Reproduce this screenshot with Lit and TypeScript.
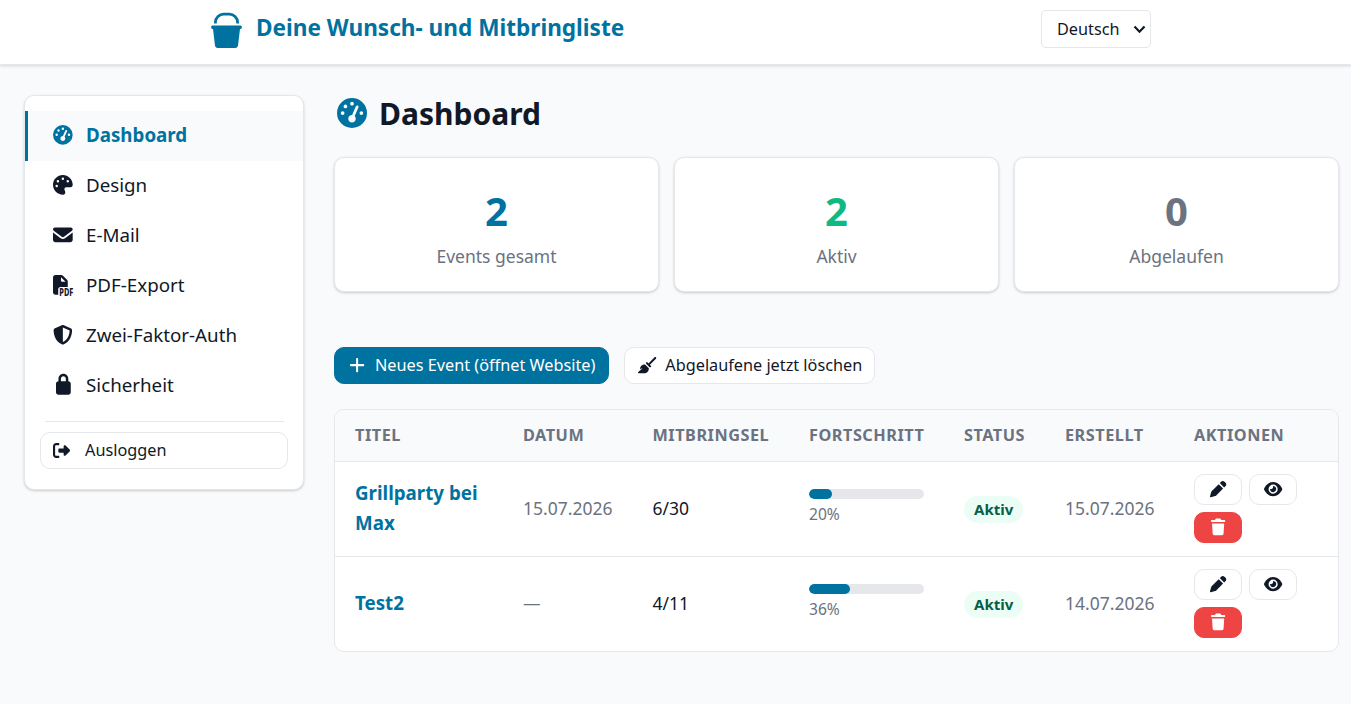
import { LitElement, html, css, svg } from 'lit';
import { customElement, property, state } from 'lit/decorators.js';
import { classMap } from 'lit/directives/class-map.js';
import { styleMap } from 'lit/directives/style-map.js';

interface IconShape {
  width: number;
  path: string;
  label?: string;
}

const ICONS: Record<string, IconShape> = {
  gauge: {
    width: 512,
    path: 'M0 256a256 256 0 1 1 512 0A256 256 0 1 1 0 256zM288 96a32 32 0 1 0 -64 0 32 32 0 1 0 64 0zM256 416c35.3 0 64-28.7 64-64c0-17.4-6.9-33.1-18.1-44.6L366 161.7c5.3-12.1-.2-26.3-12.3-31.6s-26.3 .2-31.6 12.3L257.9 288c-.6 0-1.3 0-1.9 0c-35.3 0-64 28.7-64 64s28.7 64 64 64zM176 144a32 32 0 1 0 -64 0 32 32 0 1 0 64 0zM96 288a32 32 0 1 0 0-64 32 32 0 1 0 0 64zm352-32a32 32 0 1 0 -64 0 32 32 0 1 0 64 0z',
  },
  palette: {
    width: 512,
    path: 'M512 256c0 .9 0 1.8 0 2.7c-.4 36.5-33.6 61.3-70.1 61.3H344c-26.5 0-48 21.5-48 48c0 3.4 .4 6.7 1 9.9c2.1 10.2 6.5 20 10.8 29.9c6.1 13.8 12.1 27.5 12.1 42c0 31.8-21.6 60.7-53.4 62c-3.5 .1-7 .2-10.6 .2C114.6 512 0 397.4 0 256S114.6 0 256 0S512 114.6 512 256zM128 288a32 32 0 1 0 -64 0 32 32 0 1 0 64 0zm0-96a32 32 0 1 0 0-64 32 32 0 1 0 0 64zM288 96a32 32 0 1 0 -64 0 32 32 0 1 0 64 0zm96 96a32 32 0 1 0 0-64 32 32 0 1 0 0 64z',
  },
  envelope: {
    width: 512,
    path: 'M48 64c-26.5 0-48 21.5-48 48 0 15.1 7.1 29.3 19.2 38.4l208 156c17.1 12.8 40.5 12.8 57.6 0l208-156c12.1-9.1 19.2-23.3 19.2-38.4 0-26.5-21.5-48-48-48L48 64zM0 196L0 384c0 35.3 28.7 64 64 64l384 0c35.3 0 64-28.7 64-64l0-188-198.4 148.8c-34.1 25.6-81.1 25.6-115.2 0L0 196z',
  },
  pdf: {
    width: 512,
    path: 'M64 0H214C231 0 247 7 259 19L365 125C377 137 384 153 384 170V312H192C161 312 136 337 136 368V512H64C28.7 512 0 483 0 448V64C0 28.7 28.7 0 64 0ZM208 58V152c0 13 11 24 24 24H326Z',
    label: 'PDF',
  },
  shield: {
    width: 512,
    path: 'M256 0c4.6 0 9.2 1 13.4 2.9L457.7 82.8c22 9.3 38.4 31 38.3 57.2c-.5 99.2-41.3 280.7-213.6 363.2c-16.7 8-36.1 8-52.8 0C57.3 420.7 16.5 239.2 16 140c-.1-26.2 16.3-47.9 38.3-57.2L242.7 2.9C246.8 1 251.4 0 256 0zm0 66.8V444.8C394 378 431.1 230.1 432 141.4L256 66.8l0 0z',
  },
  lock: {
    width: 384,
    path: 'M128 96l0 64 128 0 0-64c0-35.3-28.7-64-64-64s-64 28.7-64 64zM64 160l0-64C64 25.3 121.3-32 192-32S320 25.3 320 96l0 64c35.3 0 64 28.7 64 64l0 224c0 35.3-28.7 64-64 64L64 512c-35.3 0-64-28.7-64-64L0 224c0-35.3 28.7-64 64-64z',
  },
  logout: {
    width: 512,
    path: 'M377.9 105.9L500.7 228.7c7.2 7.2 11.3 17.1 11.3 27.3s-4.1 20.1-11.3 27.3L377.9 406.1c-6.4 6.4-15 9.9-24 9.9c-18.7 0-33.9-15.2-33.9-33.9l0-62.1-128 0c-17.7 0-32-14.3-32-32l0-64c0-17.7 14.3-32 32-32l128 0 0-62.1c0-18.7 15.2-33.9 33.9-33.9c9 0 17.6 3.6 24 9.9zM160 96L96 96c-17.7 0-32 14.3-32 32l0 256c0 17.7 14.3 32 32 32l64 0c17.7 0 32 14.3 32 32s-14.3 32-32 32l-64 0c-53 0-96-43-96-96L0 128C0 75 43 32 96 32l64 0c17.7 0 32 14.3 32 32s-14.3 32-32 32z',
  },
  plus: {
    width: 448,
    path: 'M256 64c0-17.7-14.3-32-32-32s-32 14.3-32 32l0 160-160 0c-17.7 0-32 14.3-32 32s14.3 32 32 32l160 0 0 160c0 17.7 14.3 32 32 32s32-14.3 32-32l0-160 160 0c17.7 0 32-14.3 32-32s-14.3-32-32-32l-160 0 0-160z',
  },
  broom: {
    width: 576,
    path: 'M566.6 54.6c12.5-12.5 12.5-32.8 0-45.3s-32.8-12.5-45.3 0l-192 192-34.7-34.7c-4.2-4.2-10-6.6-16-6.6c-12.5 0-22.6 10.1-22.6 22.6v29.1L364.3 320h29.1c12.5 0 22.6-10.1 22.6-22.6c0-6-2.4-11.8-6.6-16l-34.7-34.7 192-192zM341.1 353.4L222.6 234.9c-42.7-3.7-85.2 11.7-115.8 42.3l-8 8C76.5 307.5 64 337.7 64 369.2c0 6.8 7.1 11.2 13.2 8.2l51.1-25.5c5-2.5 9.5 4.1 5.4 7.9L7.3 473.4C2.7 477.6 0 483.6 0 489.9C0 502.1 9.9 512 22.1 512l173.3 0c38.8 0 75.9-15.4 103.4-42.8c30.6-30.6 45.9-73.1 42.3-115.8z',
  },
  pen: {
    width: 512,
    path: 'M352.9 21.2L308 66.1 445.9 204 490.8 159.1C504.4 145.6 512 127.2 512 108s-7.6-37.6-21.2-51.1L455.1 21.2C441.6 7.6 423.2 0 404 0s-37.6 7.6-51.1 21.2zM274.1 100L58.9 315.1c-10.7 10.7-18.5 24.1-22.6 38.7L.9 481.6c-2.3 8.3 0 17.3 6.2 23.4s15.1 8.5 23.4 6.2l127.8-35.5c14.6-4.1 27.9-11.8 38.7-22.6L412 237.9 274.1 100z',
  },
  eye: {
    width: 576,
    path: 'M288 32c-80.8 0-145.5 36.8-192.6 80.6C48.6 156 17.3 208 2.5 243.7c-3.3 7.9-3.3 16.7 0 24.6C17.3 304 48.6 356 95.4 399.4C142.5 443.2 207.2 480 288 480s145.5-36.8 192.6-80.6c46.8-43.5 78.1-95.4 93-131.1c3.3-7.9 3.3-16.7 0-24.6c-14.9-35.7-46.2-87.7-93-131.1C433.5 68.8 368.8 32 288 32zM144 256a144 144 0 1 1 288 0 144 144 0 1 1 -288 0zm144-64c0 35.3-28.7 64-64 64c-7.1 0-13.9-1.2-20.3-3.3c-5.5-1.8-11.9 1.6-11.7 7.4c.3 6.9 1.3 13.8 3.2 20.7c13.7 51.2 66.4 81.6 117.6 67.9s81.6-66.4 67.9-117.6c-11.1-41.5-47.8-69.4-88.6-71.1c-5.8-.2-9.2 6.1-7.4 11.7c2.1 6.4 3.3 13.2 3.3 20.3z',
  },
  trash: {
    width: 448,
    path: 'M136.7 5.9L128 32 32 32C14.3 32 0 46.3 0 64S14.3 96 32 96l384 0c17.7 0 32-14.3 32-32s-14.3-32-32-32l-96 0-8.7-26.1C306.9-7.2 294.7-16 280.9-16L167.1-16c-13.8 0-26 8.8-30.4 21.9zM416 144L32 144 53.1 467.1C54.7 492.4 75.7 512 101 512L347 512c25.3 0 46.3-19.6 47.9-44.9L416 144z',
  },
};

@customElement('app-icon')
export class AppIcon extends LitElement {
  @property() name = '';

  // The host's font-size sets the height of the icon
  static styles = css`
    :host {
      display: inline-flex;
      justify-content: center;
      flex-shrink: 0;
    }

    svg {
      display: block;
      height: 1em;
      fill: currentColor;
      overflow: visible;
    }

    .label {
      font: 800 255px 'Noto Sans', sans-serif;
    }
  `;

  render() {
    const icon = ICONS[this.name];
    if (!icon) {
      return html``;
    }

    return html`
      <svg viewBox="0 0 ${icon.width} 512" aria-hidden="true">
        <path d=${icon.path}></path>
        ${icon.label
          ? svg`<text class="label" x="165" y="550" textLength="365" lengthAdjust="spacingAndGlyphs">${icon.label}</text>`
          : ''}
      </svg>
    `;
  }
}

interface NavItem {
  id: string;
  icon: string;
  label: string;
}

interface EventRow {
  title: string;
  date: string;
  items: string;
  progress: number;
  status: string;
  created: string;
}

@customElement('app-root')
export class AppRoot extends LitElement {
  @state() private active = 'dashboard';

  private navItems: NavItem[] = [
    { id: 'dashboard', icon: 'gauge', label: 'Dashboard' },
    { id: 'design', icon: 'palette', label: 'Design' },
    { id: 'mail', icon: 'envelope', label: 'E-Mail' },
    { id: 'pdf', icon: 'pdf', label: 'PDF-Export' },
    { id: '2fa', icon: 'shield', label: 'Zwei-Faktor-Auth' },
    { id: 'security', icon: 'lock', label: 'Sicherheit' },
  ];

  private stats = [
    { value: 2, label: 'Events gesamt', tone: 'primary' },
    { value: 2, label: 'Aktiv', tone: 'success' },
    { value: 0, label: 'Abgelaufen', tone: 'muted' },
  ];

  private columns = ['Titel', 'Datum', 'Mitbringsel', 'Fortschritt', 'Status', 'Erstellt', 'Aktionen'];

  private events: EventRow[] = [
    { title: 'Grillparty bei Max', date: '15.07.2026', items: '6/30', progress: 20, status: 'Aktiv', created: '15.07.2026' },
    { title: 'Test2', date: '—', items: '4/11', progress: 36, status: 'Aktiv', created: '14.07.2026' },
  ];

  static styles = css`
    :host {
      --primary: #0072a0;
      --success: #10b981;
      --danger: #ef4444;
      --text: #111827;
      --muted: #6b7280;
      --border: #e5e7eb;
      --page: #f9fafc;
      --shadow: 0 1px 3px rgba(0, 0, 0, 0.12), 0 1px 2px rgba(0, 0, 0, 0.08);
      display: block;
      min-height: 704px;
      background: var(--page);
      color: var(--text);
      font-family: 'Noto Sans', sans-serif;
      font-size: 17.5px;
      line-height: 1.6;
    }

    * {
      box-sizing: border-box;
    }

    button {
      font: inherit;
      color: inherit;
      cursor: pointer;
    }

    .header {
      display: flex;
      justify-content: space-between;
      height: 65px;
      padding: 10px 200px 0 211px;
      background: #ffffff;
      border-bottom: 1px solid var(--border);
      box-shadow: 0 1px 3px rgba(0, 0, 0, 0.15);
    }

    .brand {
      display: flex;
      align-items: flex-start;
      gap: 14px;
      color: var(--primary);
    }

    .brand-logo {
      width: 31px;
      height: 36px;
      margin-top: 2px;
    }

    .brand-name {
      font-size: 22.6px;
      font-weight: 700;
      line-height: 36px;
    }

    .language {
      display: flex;
      align-items: center;
      justify-content: space-between;
      width: 110px;
      height: 38px;
      padding: 0 4px 0 15px;
      background: #ffffff;
      border: 1px solid var(--border);
      border-radius: 5px;
      font-size: 16.25px;
    }

    .chevron {
      width: 13px;
      height: 9px;
      fill: none;
      stroke: var(--text);
      stroke-width: 2.2;
    }

    .layout {
      display: flex;
      align-items: flex-start;
      gap: 30px;
      padding: 30px 12px 0 24px;
    }

    .sidebar {
      width: 280px;
      height: 395px;
      padding: 15px 0;
      background: #ffffff;
      border: 1px solid var(--border);
      border-radius: 10px;
      box-shadow: var(--shadow);
      flex-shrink: 0;
    }

    .nav-item {
      display: flex;
      align-items: center;
      gap: 13px;
      width: 100%;
      height: 50px;
      padding: 0 25px 2px;
      border: none;
      border-left: 3px solid transparent;
      background: none;
      font-size: 18.75px;
      text-align: left;
    }

    .nav-item.active {
      background: var(--page);
      border-left-color: var(--primary);
      color: var(--primary);
      font-weight: 700;
    }

    .nav-icon {
      width: 20px;
      padding-bottom: 1px;
      font-size: 19.7px;
    }

    .divider {
      height: 1px;
      margin: 10px 19px 10px 20px;
      background: var(--border);
    }

    .logout {
      display: flex;
      align-items: center;
      gap: 15px;
      width: 248px;
      height: 37px;
      margin-left: 15px;
      padding: 0 12px 2px;
      border: 1px solid var(--border);
      border-radius: 10px;
      background: #ffffff;
      font-size: 16.25px;
    }

    .logout-icon {
      padding-top: 1px;
      font-size: 17px;
    }

    .content {
      flex: 1;
      min-width: 0;
    }

    .heading {
      display: flex;
      align-items: center;
      gap: 12px;
      height: 38px;
      margin: 0 0 24px;
      padding-left: 3px;
      font-size: 30px;
      font-weight: 700;
    }

    .heading-icon {
      padding-bottom: 2px;
      color: var(--primary);
    }

    .stats {
      display: grid;
      grid-template-columns: repeat(3, 1fr);
      gap: 15px;
    }

    .stat {
      height: 135px;
      padding-top: 28px;
      background: #ffffff;
      border: 1px solid var(--border);
      border-radius: 10px;
      box-shadow: var(--shadow);
      text-align: center;
    }

    .stat-value {
      font-size: 40px;
      font-weight: 700;
      line-height: 50px;
    }

    .stat-value.primary {
      color: var(--primary);
    }

    .stat-value.success {
      color: var(--success);
    }

    .stat-value.muted,
    .stat-label {
      color: var(--muted);
    }

    .stat-label {
      margin-top: 6px;
      line-height: 28px;
    }

    .toolbar {
      display: flex;
      gap: 15px;
      margin: 55px 0 25px;
    }

    .button {
      display: flex;
      align-items: center;
      gap: 8px;
      height: 37px;
      padding: 0 12px 2px;
      border: 1px solid var(--border);
      border-radius: 10px;
      background: #ffffff;
      font-size: 16.25px;
      white-space: nowrap;
    }

    .button.primary {
      padding-right: 13px;
      background: var(--primary);
      border-color: var(--primary);
      color: #ffffff;
    }

    .button-icon {
      width: 20px;
      padding-top: 1px;
      font-size: 16.25px;
    }

    .table {
      background: #ffffff;
      border: 1px solid var(--border);
      border-radius: 10px;
      overflow: hidden;
    }

    .row {
      display: grid;
      grid-template-columns: 168px 129.5px 156.5px 155px 101px 129px 1fr;
      align-items: center;
      height: 95px;
      padding-bottom: 2px;
      border-top: 1px solid var(--border);
    }

    .row.head {
      height: 51px;
      border-top: none;
      background: var(--page);
      color: var(--muted);
      font-size: 16.25px;
      font-weight: 700;
      letter-spacing: 0.52px;
      text-transform: uppercase;
    }

    .cell {
      padding-left: 20px;
    }

    .cell.muted {
      color: var(--muted);
    }

    .event-title {
      color: var(--primary);
      font-size: 18.75px;
      font-weight: 700;
      line-height: 30px;
      text-decoration: none;
    }

    .progress {
      width: 115px;
      height: 10px;
      border-radius: 5px;
      background: var(--border);
      overflow: hidden;
    }

    .progress-bar {
      height: 100%;
      border-radius: 5px;
      background: var(--primary);
    }

    .progress-text {
      margin: 3px 0 1px;
      color: var(--muted);
      font-size: 15.6px;
      line-height: 24px;
    }

    .badge {
      display: inline-block;
      padding: 0 10px;
      border-radius: 14px;
      background: #ecfdf5;
      color: #065f46;
      font-size: 15px;
      font-weight: 700;
      line-height: 27px;
      vertical-align: middle;
    }

    .actions {
      display: flex;
      flex-wrap: wrap;
      gap: 7px;
    }

    .action {
      display: flex;
      align-items: center;
      justify-content: center;
      width: 48px;
      height: 31px;
      padding: 0;
      border: 1px solid var(--border);
      border-radius: 10px;
      background: #ffffff;
      font-size: 16.25px;
    }

    .action.danger {
      background: var(--danger);
      border-color: var(--danger);
      color: #ffffff;
    }
  `;

  private _renderHeader() {
    return html`
      <header class="header">
        <div class="brand">
          <svg class="brand-logo" viewBox="0 0 31 36" aria-hidden="true">
            <path d="M4.4 11.5V10.5C4.4 5.5 8.5 2.2 12.5 2.2H18.5C22.5 2.2 26.6 5.5 26.6 10.5V11.5" fill="none" stroke="currentColor" stroke-width="2.8"></path>
            <path d="M1.5 13.5H29.5C31.3 13.5 31.3 17 29.5 17H29L27 33.5C26.8 35 25.8 36 24.3 36H6.7C5.2 36 4.2 35 4 33.5L2 17H1.5C-.3 17-.3 13.5 1.5 13.5Z" fill="currentColor"></path>
          </svg>
          <span class="brand-name">Deine Wunsch- und Mitbringliste</span>
        </div>
        <button class="language">
          Deutsch
          <svg class="chevron" viewBox="0 0 13 9"><path d="M1.5 1.5L6.5 6.7L11.5 1.5"></path></svg>
        </button>
      </header>
    `;
  }

  private _renderSidebar() {
    return html`
      <nav class="sidebar">
        ${this.navItems.map(
          (item) => html`
            <button
              class=${classMap({ 'nav-item': true, active: item.id === this.active })}
              @click=${() => (this.active = item.id)}
            >
              <app-icon class="nav-icon" name=${item.icon}></app-icon>
              ${item.label}
            </button>
          `
        )}
        <div class="divider"></div>
        <button class="logout">
          <app-icon class="logout-icon" name="logout"></app-icon>
          Ausloggen
        </button>
      </nav>
    `;
  }

  private _renderRow(event: EventRow) {
    return html`
      <div class="row">
        <div class="cell"><a class="event-title">${event.title}</a></div>
        <div class="cell muted">${event.date}</div>
        <div class="cell">${event.items}</div>
        <div class="cell">
          <div class="progress">
            <div class="progress-bar" style=${styleMap({ width: `${event.progress}%` })}></div>
          </div>
          <div class="progress-text">${event.progress}%</div>
        </div>
        <div class="cell"><span class="badge">${event.status}</span></div>
        <div class="cell muted">${event.created}</div>
        <div class="cell actions">
          <button class="action"><app-icon name="pen"></app-icon></button>
          <button class="action"><app-icon name="eye"></app-icon></button>
          <button class="action danger"><app-icon name="trash"></app-icon></button>
        </div>
      </div>
    `;
  }

  render() {
    return html`
      ${this._renderHeader()}
      <div class="layout">
        ${this._renderSidebar()}
        <main class="content">
          <h1 class="heading">
            <app-icon class="heading-icon" name="gauge"></app-icon>
            Dashboard
          </h1>

          <div class="stats">
            ${this.stats.map(
              (stat) => html`
                <div class="stat">
                  <div class="stat-value ${stat.tone}">${stat.value}</div>
                  <div class="stat-label">${stat.label}</div>
                </div>
              `
            )}
          </div>

          <div class="toolbar">
            <button class="button primary">
              <app-icon class="button-icon" name="plus"></app-icon>
              Neues Event (öffnet Website)
            </button>
            <button class="button">
              <app-icon class="button-icon" name="broom"></app-icon>
              Abgelaufene jetzt löschen
            </button>
          </div>

          <div class="table">
            <div class="row head">
              ${this.columns.map((column) => html`<div class="cell">${column}</div>`)}
            </div>
            ${this.events.map((event) => this._renderRow(event))}
          </div>
        </main>
      </div>
    `;
  }
}
